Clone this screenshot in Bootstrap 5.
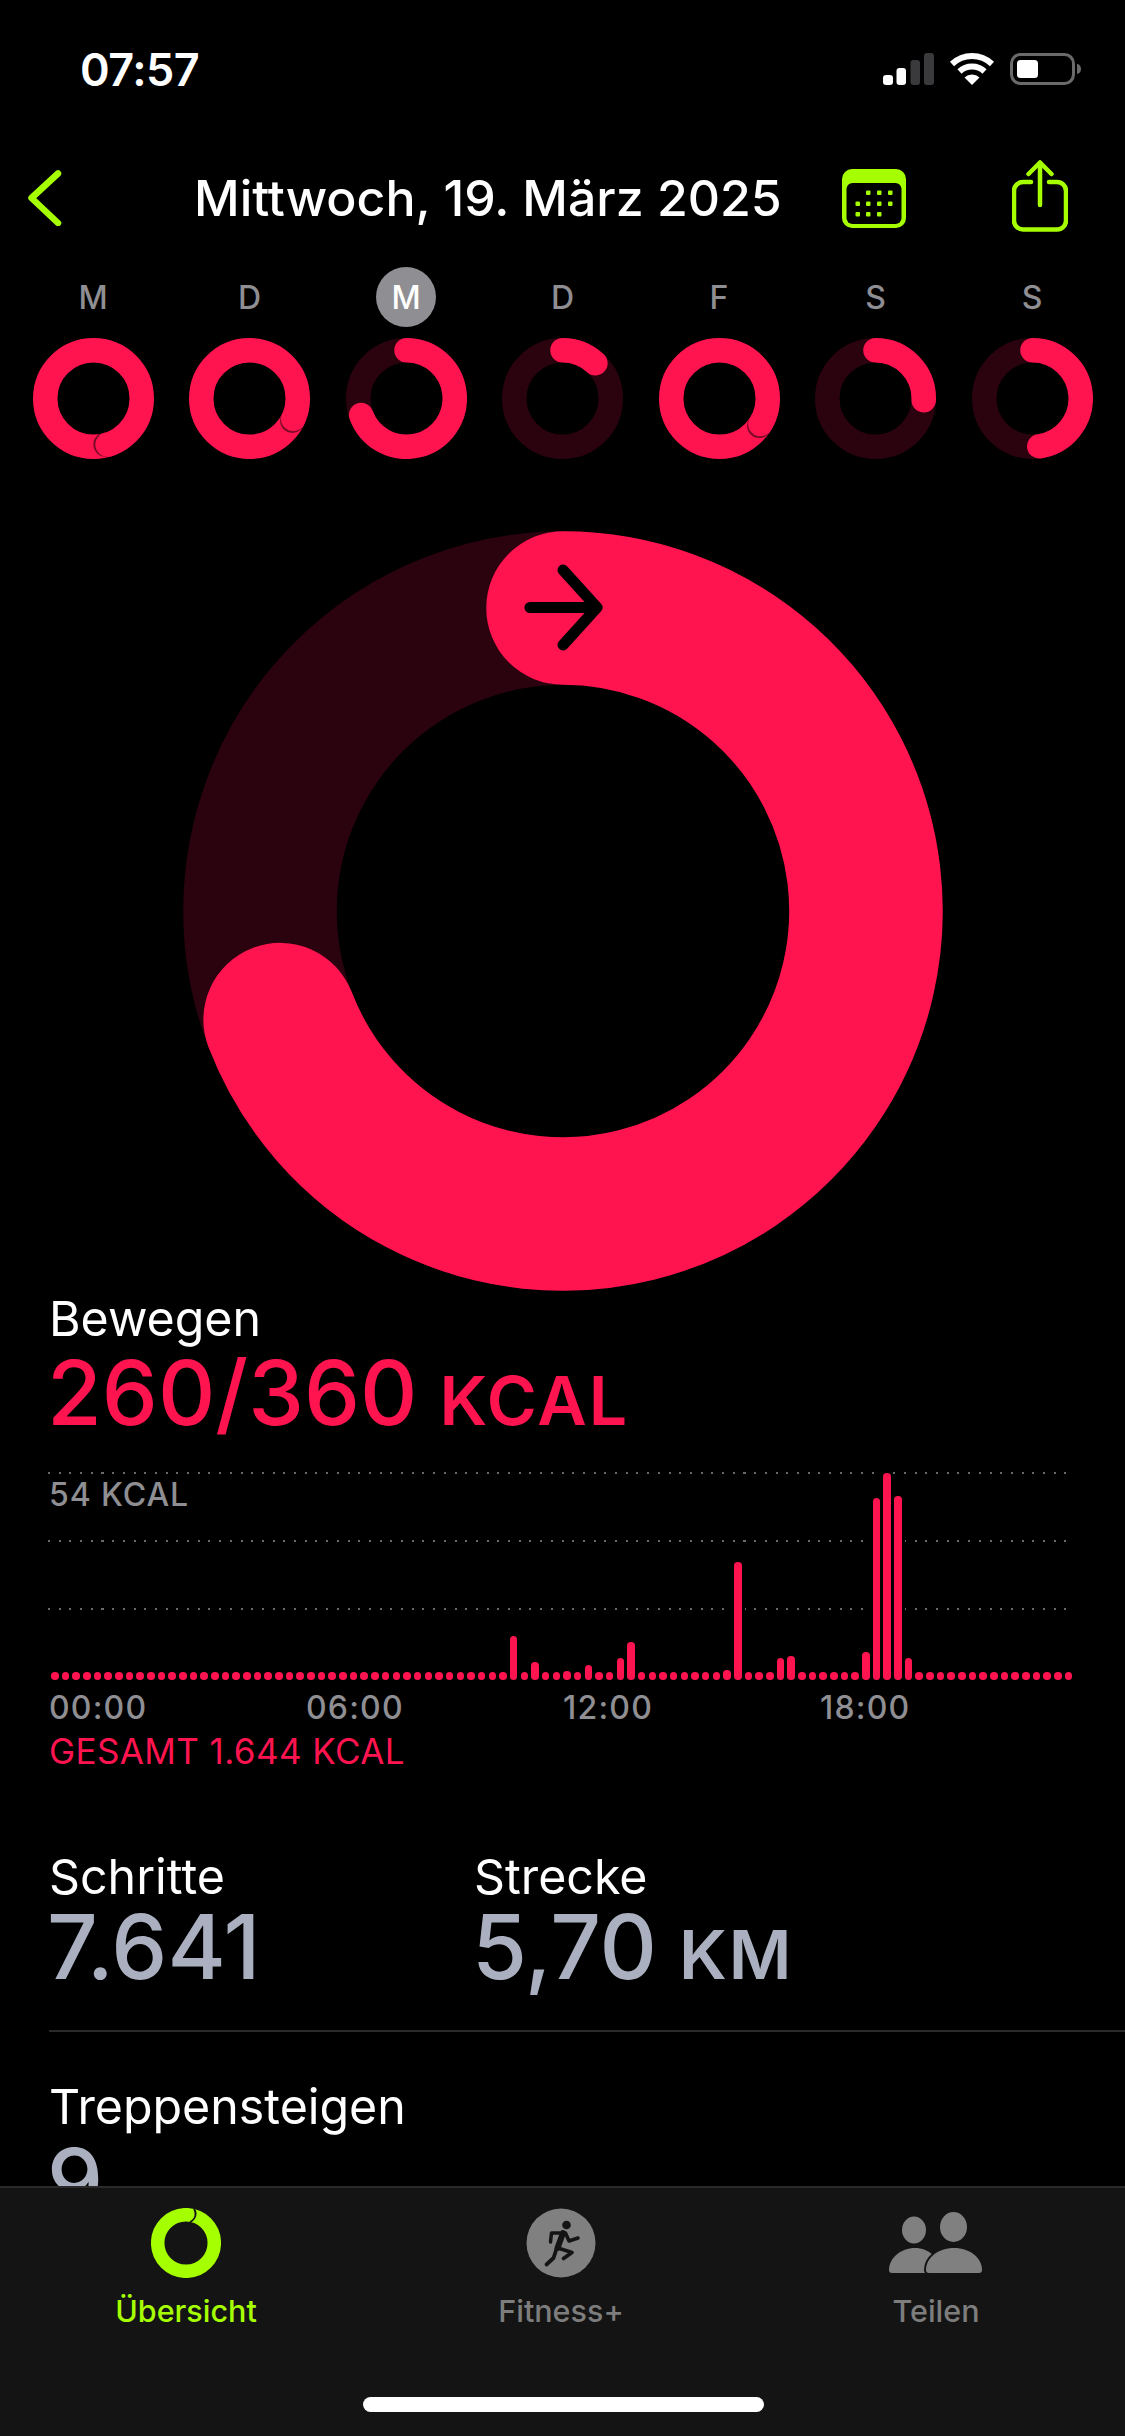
<!DOCTYPE html>
<html lang="de">
<head>
<meta charset="utf-8">
<title>Aktivität</title>
<link rel="stylesheet" href="https://cdn.jsdelivr.net/npm/bootstrap@5.3.0/dist/css/bootstrap.min.css">
<style>
html,body{background:#000;margin:0}
.phone{width:1125px;height:2436px;overflow:hidden;background:#000;color:#fff;font-family:Inter,"Liberation Sans",sans-serif}
.statusline{height:138px;padding:0 44px 0 80px;flex:none}
.clock{font-size:45px;font-weight:600;line-height:1;letter-spacing:-.5px}
.statusicons{gap:15px}
.navline{height:120px;padding-left:28px;margin-bottom:9px;flex:none}
.navtitle{width:587px;margin-left:132px;margin-right:61px;font-size:50px;font-weight:500;white-space:nowrap;text-align:center;line-height:1.2}
.sharebtn{margin-left:106px;margin-top:-4px}
.weekline{padding:0 32.5px;flex:none}
.daycol{width:121px}
.dayletter{width:60px;height:60px;font-size:32px;font-weight:500;color:#8e8e93;margin-bottom:11px;line-height:1;padding-top:2px}
.dayletter.today{background:#8e8e93;color:#fff}
.bigring{margin-top:72.5px;flex:none;overflow:visible}
.content{min-height:0;overflow:hidden}
.stats{padding-left:49px;padding-top:3px}
.metlabel{font-size:48.3px;line-height:52px;font-weight:400;height:52px}
.metvalue{font-size:89px;line-height:96px;height:96px;font-weight:500;white-space:nowrap;margin-left:-2px}
.metvalue small{font-size:68px;font-weight:600;letter-spacing:2px;margin-left:22px}
.pinkval{color:#ff1450}
.greyval{color:#aab0c0}
.chart{height:207px;width:1021px;margin-top:32px;position:relative}
.gridl{position:absolute;left:-1px;width:1023px;height:2px;background:repeating-linear-gradient(90deg,#6a6a6a 0 2px,transparent 2px 10.7px)}
.gl1{top:-1px}.gl2{top:67px}.gl3{top:135px}
.maxlabel{position:absolute;left:0;top:5px;font-size:32px;line-height:34px;color:#8e8e93;font-weight:500;letter-spacing:.9px}
.barsrow{height:100%;margin-left:2px;width:1022.75px;position:relative}
.barsrow i{display:block;width:7.5px;height:7.5px;border-radius:3.75px;background:#ff1450;box-shadow:0 0 0 1.500px #000}
.barsrow i.tall{box-shadow:0 0 0 3px #000}
.hours{margin-top:11.5px;height:34px}
.hourlabel{width:257px;font-size:32px;line-height:34px;font-weight:500;color:#8e8e93;letter-spacing:1.2px}
.totalline{margin-top:9px;font-size:35px;line-height:34px;color:#ff1450;font-weight:400;letter-spacing:.4px}
.pairline{margin-top:83px}
.paircol{width:425px}
.paircol .metvalue{margin-top:-4.5px}
.divider{border-top:2px solid #2a2a2c;margin-top:35px;margin-bottom:49px}
.tabbar{height:250px;flex:none;background:#141414;border-top:2px solid #2a2a2a}
.tabrow{margin:20px 0 0 -1.5px;width:1125px}
.tabicon{height:70px}
.tablabel{margin-top:15px;font-size:30.5px;line-height:36px;font-weight:500;color:#7d7d7d}
.tablabel.active{color:#a6ff00}
.homebar{width:401px;height:15px;margin:68px 0 0 363px;background:#fff}
</style>
</head>
<body>
<div class="phone d-flex flex-column">
  <div class="content flex-grow-1">
    <div class="statusline d-flex align-items-center justify-content-between">
      <span class="clock">07:57</span>
      <div class="statusicons d-flex align-items-center">
        <svg width="51" height="32" viewBox="0 0 51 32"><rect x="0" y="22" width="10" height="10" rx="3" fill="#fff"/><rect x="13.500" y="15" width="9.500" height="17" rx="3" fill="#fff"/><rect x="27.500" y="7" width="9.500" height="25" rx="3" fill="#3a3a3c"/><rect x="41" y="0" width="10" height="32" rx="3" fill="#3a3a3c"/></svg>
        <svg width="46" height="32" viewBox="0 0 46 32"><g fill="none" stroke="#fff" stroke-width="6"><path d="M3 11 A29 29 0 0 1 43 11"/><path d="M10.500 18.500 A18 18 0 0 1 35.500 18.500"/></g><path d="M23 32 L15.500 24.500 A11 11 0 0 1 30.500 24.500 Z" fill="#fff"/></svg>
        <svg width="71" height="32" viewBox="0 0 71 32"><rect x="1.500" y="1.500" width="62" height="29" rx="9" fill="none" stroke="#6a6a6a" stroke-width="3"/><rect x="7" y="7" width="21" height="18" rx="3.500" fill="#fff"/><path d="M67 11 a4 5 0 0 1 0 10z" fill="#6a6a6a"/></svg>
      </div>
    </div>

    <div class="navline d-flex align-items-center">
      <svg width="34" height="56" viewBox="0 0 34 56"><path d="M30 3.500 L3.500 28 L30 53" fill="none" stroke="#a6ff00" stroke-width="6.500" stroke-linecap="round" stroke-linejoin="round"/></svg>
      <div class="navtitle">Mittwoch, 19. März 2025</div>
      <svg class="calicon" width="64" height="59" viewBox="0 0 64 59"><rect x="0" y="0" width="64" height="59" rx="10" fill="#a6ff00"/><rect x="4.500" y="14" width="55" height="41" rx="6" fill="#000"/><g fill="#a6ff00"><rect x="24" y="21.500" width="4.500" height="4.500" rx="1"/><rect x="35" y="21.500" width="4.500" height="4.500" rx="1"/><rect x="46" y="21.500" width="4.500" height="4.500" rx="1"/><rect x="13.500" y="32.500" width="4.500" height="4.500" rx="1"/><rect x="24" y="32.500" width="4.500" height="4.500" rx="1"/><rect x="35" y="32.500" width="4.500" height="4.500" rx="1"/><rect x="46" y="32.500" width="4.500" height="4.500" rx="1"/><rect x="13.500" y="43" width="4.500" height="4.500" rx="1"/><rect x="24" y="43" width="4.500" height="4.500" rx="1"/><rect x="35" y="43" width="4.500" height="4.500" rx="1"/></g></svg>
      <svg class="sharebtn" width="56" height="72" viewBox="0 0 56 72"><g fill="none" stroke="#a6ff00" stroke-width="4.500" stroke-linecap="round" stroke-linejoin="round"><path d="M19 22 H11 a9 9 0 0 0 -9 9 V60 a9 9 0 0 0 9 9.500 H45 a9 9 0 0 0 9 -9.500 V31 a9 9 0 0 0 -9 -9 H37"/><path d="M28 45 V3"/><path d="M16.500 14 L28 2.500 L39.500 14"/></g></svg>
    </div>

    <svg width="0" height="0" class="d-block"><defs><clipPath id="annulus"><path clip-rule="evenodd" d="M0 60.500a60.500 60.500 0 1 0 121 0a60.500 60.500 0 1 0 -121 0zM24.500 60.500a36 36 0 1 0 72 0a36 36 0 1 0 -72 0z"/></clipPath></defs></svg>

    <div class="weekline d-flex justify-content-between">
      <div class="daycol d-flex flex-column align-items-center">
        <div class="dayletter rounded-circle d-flex align-items-center justify-content-center">M</div>
        <svg width="121" height="121" viewBox="0 0 121 121"><circle cx="60.500" cy="60.500" r="48.250" fill="none" stroke="#ff1450" stroke-width="24.500"/><g clip-path="url(#annulus)"><circle cx="72.600" cy="106.500" r="12.250" fill="#7a0a26"/><circle cx="74.600" cy="106.600" r="12.250" fill="#ff1450"/></g></svg>
      </div>
      <div class="daycol d-flex flex-column align-items-center">
        <div class="dayletter rounded-circle d-flex align-items-center justify-content-center">D</div>
        <svg width="121" height="121" viewBox="0 0 121 121"><circle cx="60.500" cy="60.500" r="48.250" fill="none" stroke="#ff1450" stroke-width="24.500"/><g clip-path="url(#annulus)"><circle cx="103.300" cy="82.700" r="12.250" fill="#7a0a26"/><circle cx="104.230" cy="80.890" r="12.250" fill="#ff1450"/></g></svg>
      </div>
      <div class="daycol d-flex flex-column align-items-center">
        <div class="dayletter today rounded-circle d-flex align-items-center justify-content-center">M</div>
        <svg width="121" height="121" viewBox="0 0 121 121"><circle cx="60.500" cy="60.500" r="48.250" fill="none" stroke="#2b030f" stroke-width="24.500"/><path d="M60.500 12.250 A48.250 48.250 0 1 1 15.160 77" fill="none" stroke="#ff1450" stroke-width="24.500" stroke-linecap="round"/></svg>
      </div>
      <div class="daycol d-flex flex-column align-items-center">
        <div class="dayletter rounded-circle d-flex align-items-center justify-content-center">D</div>
        <svg width="121" height="121" viewBox="0 0 121 121"><circle cx="60.500" cy="60.500" r="48.250" fill="none" stroke="#2b030f" stroke-width="24.500"/><path d="M60.500 12.250 A48.250 48.250 0 0 1 93.400 25.210" fill="none" stroke="#ff1450" stroke-width="24.500" stroke-linecap="round"/></svg>
      </div>
      <div class="daycol d-flex flex-column align-items-center">
        <div class="dayletter rounded-circle d-flex align-items-center justify-content-center">F</div>
        <svg width="121" height="121" viewBox="0 0 121 121"><circle cx="60.500" cy="60.500" r="48.250" fill="none" stroke="#ff1450" stroke-width="24.500"/><g clip-path="url(#annulus)"><circle cx="100.300" cy="87.800" r="12.250" fill="#7a0a26"/><circle cx="101.420" cy="86.070" r="12.250" fill="#ff1450"/></g></svg>
      </div>
      <div class="daycol d-flex flex-column align-items-center">
        <div class="dayletter rounded-circle d-flex align-items-center justify-content-center">S</div>
        <svg width="121" height="121" viewBox="0 0 121 121"><circle cx="60.500" cy="60.500" r="48.250" fill="none" stroke="#2b030f" stroke-width="24.500"/><path d="M60.500 12.250 A48.250 48.250 0 0 1 108.720 62.180" fill="none" stroke="#ff1450" stroke-width="24.500" stroke-linecap="round"/></svg>
      </div>
      <div class="daycol d-flex flex-column align-items-center">
        <div class="dayletter rounded-circle d-flex align-items-center justify-content-center">S</div>
        <svg width="121" height="121" viewBox="0 0 121 121"><circle cx="60.500" cy="60.500" r="48.250" fill="none" stroke="#2b030f" stroke-width="24.500"/><path d="M60.500 12.250 A48.250 48.250 0 0 1 67.220 108.280" fill="none" stroke="#ff1450" stroke-width="24.500" stroke-linecap="round"/></svg>
      </div>
    </div>

    <svg class="bigring d-block mx-auto" width="758" height="758" viewBox="0 0 758 758">
      <circle cx="379" cy="379" r="303" fill="none" stroke="#2b030f" stroke-width="153.500"/>
      <path d="M379 76 A303 303 0 1 1 96.100 487.600" fill="none" stroke="#ff1450" stroke-width="153.500" stroke-linecap="round"/>
      <g fill="none" stroke="#000" stroke-width="11" stroke-linecap="round" stroke-linejoin="round"><path d="M346 75.500 H412"/><path d="M379 38 L413 75.500 L379 113"/></g>
    </svg>

    <div class="stats">
      <div class="metlabel">Bewegen</div>
      <div class="metvalue pinkval">260/360<small>KCAL</small></div>

      <div class="chart">
        <div class="gridl gl1"></div><div class="gridl gl2"></div><div class="gridl gl3"></div>
        <div class="barsrow d-flex align-items-end justify-content-between">
          <i></i><i></i><i></i><i></i><i></i><i></i><i></i><i></i><i></i><i></i>
          <i></i><i></i><i></i><i></i><i></i><i></i><i></i><i></i><i></i><i></i>
          <i></i><i></i><i></i><i></i><i></i><i></i><i></i><i></i><i></i><i></i>
          <i></i><i></i><i></i><i></i><i></i><i></i><i></i><i></i><i></i><i></i>
          <i></i><i></i><i></i>
          <i class="tall" style="height:44px"></i><i></i><i class="tall" style="height:18px"></i><i></i><i></i><i style="height:8.700px"></i><i></i><i class="tall" style="height:14.700px"></i><i></i><i></i><i class="tall" style="height:22px"></i><i class="tall" style="height:37.300px"></i>
          <i></i><i></i><i></i><i></i><i></i><i></i><i></i><i></i>
          <i style="height:10px"></i><i class="tall" style="height:117.300px"></i><i></i><i></i><i></i><i class="tall" style="height:21.700px"></i><i class="tall" style="height:24px"></i>
          <i></i><i></i><i></i><i></i><i></i><i></i>
          <i class="tall" style="height:27.300px"></i><i class="tall" style="height:181.700px"></i><i class="tall" style="height:206.300px"></i><i class="tall" style="height:183.300px"></i><i class="tall" style="height:21.700px"></i>
          <i></i><i></i><i></i><i></i><i></i><i></i><i></i><i></i><i></i><i></i><i></i><i></i><i></i><i></i><i></i>
        </div>
        <div class="maxlabel">54 KCAL</div>
      </div>

      <div class="hours d-flex">
        <div class="hourlabel">00:00</div><div class="hourlabel">06:00</div><div class="hourlabel">12:00</div><div class="hourlabel">18:00</div>
      </div>
      <div class="totalline">GESAMT 1.644 KCAL</div>

      <div class="pairline d-flex">
        <div class="paircol">
          <div class="metlabel">Schritte</div>
          <div class="metvalue greyval">7.641</div>
        </div>
        <div class="paircol">
          <div class="metlabel">Strecke</div>
          <div class="metvalue greyval">5,70<small>KM</small></div>
        </div>
      </div>
      <div class="divider"></div>
      <div class="metlabel">Treppensteigen</div>
      <div class="metvalue greyval">9</div>
    </div>
  </div>

  <div class="tabbar d-flex flex-column">
    <div class="tabrow row g-0 text-center">
      <div class="col-4">
        <div class="tabicon"><svg width="70" height="70" viewBox="0 0 70 70"><circle cx="35" cy="35" r="28.300" fill="none" stroke="#a6ff00" stroke-width="13.500"/><path d="M43 1 C46 5 45 11 39 14" fill="none" stroke="#141414" stroke-width="1.800"/></svg></div>
        <div class="tablabel active">Übersicht</div>
      </div>
      <div class="col-4">
        <div class="tabicon"><svg width="70" height="70" viewBox="0 0 70 70"><circle cx="35" cy="35" r="34.500" fill="#808080"/><circle cx="40.500" cy="17" r="4.300" fill="#141414"/><g fill="none" stroke="#141414" stroke-linecap="round" stroke-linejoin="round"><path d="M37 25 L31.500 40" stroke-width="6"/><path d="M36 25 H25.500 L24.500 34" stroke-width="3.500"/><path d="M39.500 25 L43 33 L52 30" stroke-width="3.500"/><path d="M32 40 L46 44.500 L37.500 50.500" stroke-width="3.800"/><path d="M30.500 41 L27.500 50 L20.500 56.500" stroke-width="3.800"/></g></svg></div>
        <div class="tablabel">Fitness+</div>
      </div>
      <div class="col-4">
        <div class="tabicon"><svg width="94" height="66" viewBox="0 0 94 66"><g fill="#808080"><ellipse cx="25" cy="22" rx="12" ry="13.500"/><ellipse cx="64.500" cy="19" rx="13.500" ry="15"/><path d="M3 65 a3 3 0 0 1 -3 -3 C0 50 12 40 26 40 C40 40 50 50 50 62 a3 3 0 0 1 -3 3z"/><path d="M40 65 a3 3 0 0 1 -3 -3 C37 50 49 40 65 40 C81 40 93 50 93 62 a3 3 0 0 1 -3 3z" stroke="#141414" stroke-width="4" paint-order="stroke"/></g></svg></div>
        <div class="tablabel">Teilen</div>
      </div>
    </div>
    <div class="homebar rounded-pill"></div>
  </div>
</div>
<script src="https://cdn.jsdelivr.net/npm/bootstrap@5.3.0/dist/js/bootstrap.bundle.min.js"></script>
</body>
</html>
